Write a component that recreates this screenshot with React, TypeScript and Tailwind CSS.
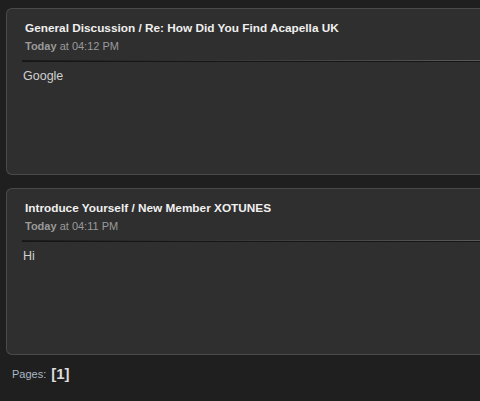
const posts = [
  {
    title: "General Discussion / Re: How Did You Find Acapella UK",
    time: "04:12 PM",
    body: "Google",
  },
  {
    title: "Introduce Yourself / New Member XOTUNES",
    time: "04:11 PM",
    body: "Hi",
  },
];

function PostCard({ title, time, body }: { title: string; time: string; body: string }) {
  return (
    <div className="h-[167px] rounded-l-[6px] border border-r-0 border-[#4a4a4a] bg-[#2f2f2f] pl-[15px]">
      <div className="pt-[11px] pl-[3px] text-[11.8px] font-bold leading-[16px] text-[#f0f0f0]">
        {title}
      </div>
      <div className="mt-[2px] pl-[3px] text-[11px] leading-[16px] text-[#9a9a9a]">
        <span className="font-bold">Today</span> at {time}
      </div>
      <div className="mt-[6px]">
        <div className="h-px bg-gradient-to-r from-[#1a1a1a] via-[#3a3a3a] to-[#5a5a5a]" />
        <div className="h-px bg-[#161616]" />
      </div>
      <div className="pt-[6px] pl-[1px] text-[12.5px] leading-[16px] text-[#d0d0d0]">{body}</div>
    </div>
  );
}

export default function App() {
  return (
    <div
      className="h-[401px] w-[480px] overflow-hidden bg-[#1f1f1f] pl-[6px] pt-[8px]"
      style={{ fontFamily: "'Liberation Sans', Arial, sans-serif" }}
    >
      <div className="flex flex-col gap-[13px]">
        {posts.map((p) => (
          <PostCard key={p.title} {...p} />
        ))}
      </div>
      <div className="mt-[8px] flex items-center gap-[5px] pl-[6px]">
        <span className="text-[11px] text-[#a9b8c6]">Pages:</span>
        <span className="text-[15px] font-bold text-[#dcdcdc]">[1]</span>
      </div>
    </div>
  );
}
